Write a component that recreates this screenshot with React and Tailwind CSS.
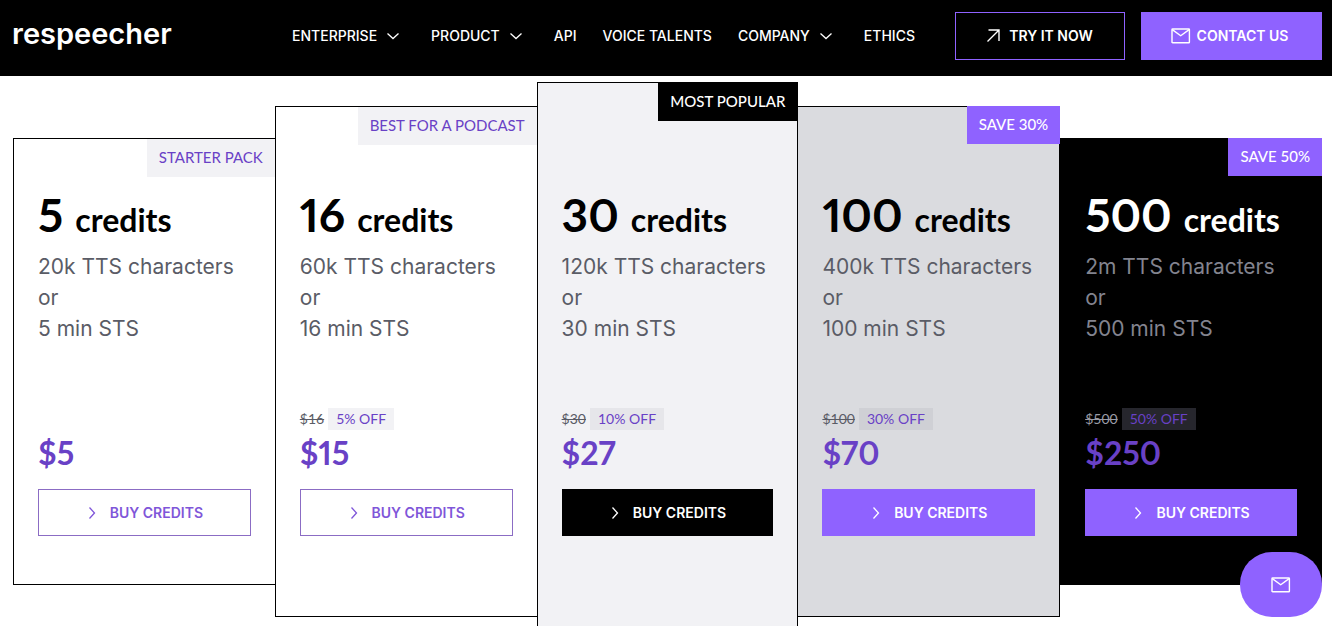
import clsx from 'clsx';

const navItems = [
  { label: 'ENTERPRISE', menu: true },
  { label: 'PRODUCT', menu: true },
  { label: 'API' },
  { label: 'VOICE TALENTS' },
  { label: 'COMPANY', menu: true },
  { label: 'ETHICS' },
];

const plans = [
  {
    credits: 5,
    characters: '20k',
    minutes: 5,
    price: '$5',
    tag: 'STARTER PACK',
    tagClass: 'bg-[#f2f2f5] text-[#6941c6]',
    cardClass: 'border border-r-0 border-black bg-white pt-14 pb-12',
    buttonClass: 'border border-[#8b6cc4] text-[#7f56d9]',
  },
  {
    credits: 16,
    characters: '60k',
    minutes: 16,
    oldPrice: '$16',
    off: '5% OFF',
    price: '$15',
    tag: 'BEST FOR A PODCAST',
    tagClass: 'bg-[#f2f2f5] text-[#6941c6]',
    cardClass: 'border border-r-0 border-black bg-white pt-22 pb-20',
    buttonClass: 'border border-[#8b6cc4] text-[#7f56d9]',
    offClass: 'bg-[#f2f2f5]',
  },
  {
    credits: 30,
    characters: '120k',
    minutes: 30,
    oldPrice: '$30',
    off: '10% OFF',
    price: '$27',
    tag: 'MOST POPULAR',
    tagClass: 'bg-black text-white font-medium',
    cardClass: 'border border-black bg-[#f2f2f5] pt-28 pb-26',
    buttonClass: 'bg-black text-white',
    offClass: 'bg-[#e6e6ea]',
  },
  {
    credits: 100,
    characters: '400k',
    minutes: 100,
    oldPrice: '$100',
    off: '30% OFF',
    price: '$70',
    tag: 'SAVE 30%',
    tagClass: 'bg-[#8f62ff] text-white font-medium -mt-px -mr-px',
    cardClass: 'border border-l-0 border-black bg-[#dadbdf] pt-22 pb-20',
    buttonClass: 'bg-[#8f62ff] text-white',
    offClass: 'bg-[#cfd0d5]',
  },
  {
    credits: 500,
    characters: '2m',
    minutes: 500,
    oldPrice: '$500',
    off: '50% OFF',
    price: '$250',
    tag: 'SAVE 50%',
    tagClass: 'bg-[#8f62ff] text-white font-medium -mt-px -mr-px',
    cardClass: 'border border-black bg-black pt-14 pb-12',
    buttonClass: 'bg-[#8f62ff] text-white',
    offClass: 'bg-[#26262d]',
    dark: true,
  },
];

function ChevronDown() {
  return (
    <svg viewBox="0 0 24 24" className="size-6" fill="none" stroke="currentColor" strokeWidth="1.3" aria-hidden="true">
      <path d="M6.5 9.5l5.5 5 5.5-5" />
    </svg>
  );
}

function ChevronRight() {
  return (
    <svg viewBox="0 0 24 24" className="size-6" fill="none" stroke="currentColor" strokeWidth="1.3" aria-hidden="true">
      <path d="M9.5 6.5l5 5.5-5 5.5" />
    </svg>
  );
}

function ArrowUpRight() {
  return (
    <svg viewBox="0 0 24 24" className="size-6" fill="none" stroke="currentColor" strokeWidth="1.4" aria-hidden="true">
      <path d="M6.5 17.5L18 6M7.5 6H18v11" />
    </svg>
  );
}

function Envelope() {
  return (
    <svg viewBox="0 0 24 24" className="size-6" fill="none" stroke="currentColor" strokeWidth="1.4" strokeLinejoin="round" aria-hidden="true">
      <rect x="3" y="5" width="17.4" height="13.8" rx="0.6" />
      <path d="M3.3 5.6l8.4 6.2 8.4-6.2" />
    </svg>
  );
}

function Header() {
  return (
    <header className="sticky top-0 z-20 flex h-19 items-center bg-black pr-[10px] pb-1 pl-3 text-sm text-white">
      <a href="#" className="pb-1 text-[29px] leading-9 font-semibold">respeecher</a>
      <nav className="ml-auto flex items-center gap-[26px] font-medium">
        {navItems.map((item) =>
          item.menu ? (
            <button key={item.label} type="button" className="flex items-center gap-1">
              {item.label}
              <ChevronDown />
            </button>
          ) : (
            <a key={item.label} href="#">{item.label}</a>
          )
        )}
      </nav>
      <div className="ml-10 flex gap-4 font-semibold">
        <a href="#" className="flex h-12 min-w-[170px] items-center justify-center gap-1 border border-[#8f62ff] pr-1.5">
          <ArrowUpRight />
          TRY IT NOW
        </a>
        <a href="#" className="flex h-12 min-w-[181px] items-center justify-center gap-1 bg-[#8f62ff] pr-1.5">
          <Envelope />
          CONTACT US
        </a>
      </div>
    </header>
  );
}

function PlanCard({ plan }) {
  return (
    <article className={clsx('relative px-6', plan.cardClass)}>
      <span
        className={clsx(
          "absolute top-0 right-0 flex h-[38px] items-center px-3 pb-0.5 font-['Lato',sans-serif] text-[15px]",
          plan.tagClass
        )}
      >
        {plan.tag}
      </span>

      <h2
        className={clsx(
          "flex h-10 items-baseline gap-3 font-['Lato',sans-serif] text-[32px] leading-8 font-bold proportional-nums",
          plan.dark ? 'text-white' : 'text-black'
        )}
      >
        <span className="text-[46px] leading-10">{plan.credits}</span> credits
      </h2>
      <p
        className={clsx(
          'mt-4 text-[21px] leading-[31px] whitespace-nowrap',
          plan.dark ? 'text-[#83848f]' : 'text-[#5a5c66]'
        )}
      >
        {plan.characters} TTS characters
        <br />
        or
        <br />
        {plan.minutes} min STS
      </p>

      <div className="mt-16 flex h-[22px] items-center gap-1 font-['Lato',sans-serif] text-sm">
        {plan.oldPrice && (
          <>
            <s className={plan.dark ? 'text-[#9a9ba5]' : 'text-[#5a5c66]'}>{plan.oldPrice}</s>
            <span className={clsx('px-2 leading-[22px] text-[#6941c6]', plan.offClass)}>{plan.off}</span>
          </>
        )}
      </div>
      <p className="mt-1 font-['Lato',sans-serif] text-[32px] leading-[38px] font-bold text-[#6941c6] proportional-nums">
        {plan.price}
      </p>
      <button
        type="button"
        className={clsx(
          'mt-[17px] flex h-[47px] w-full items-center justify-center gap-1.5 pr-1.5 text-sm font-semibold',
          plan.buttonClass
        )}
      >
        <ChevronRight />
        BUY CREDITS
      </button>
    </article>
  );
}

export default function App() {
  return (
    <div className="min-h-screen bg-white font-['Inter',sans-serif]">
      <Header />
      <main className="grid grid-cols-5 items-center pt-[6px] pr-[10px] pl-[13px]">
        {plans.map((plan) => (
          <PlanCard key={plan.credits} plan={plan} />
        ))}
      </main>
      <button
        type="button"
        aria-label="Contact us"
        className="fixed right-[10px] bottom-[9px] z-30 flex h-[65px] w-[82px] items-center justify-center rounded-[32px] bg-[#8f62ff] text-white"
      >
        <Envelope />
      </button>
    </div>
  );
}
